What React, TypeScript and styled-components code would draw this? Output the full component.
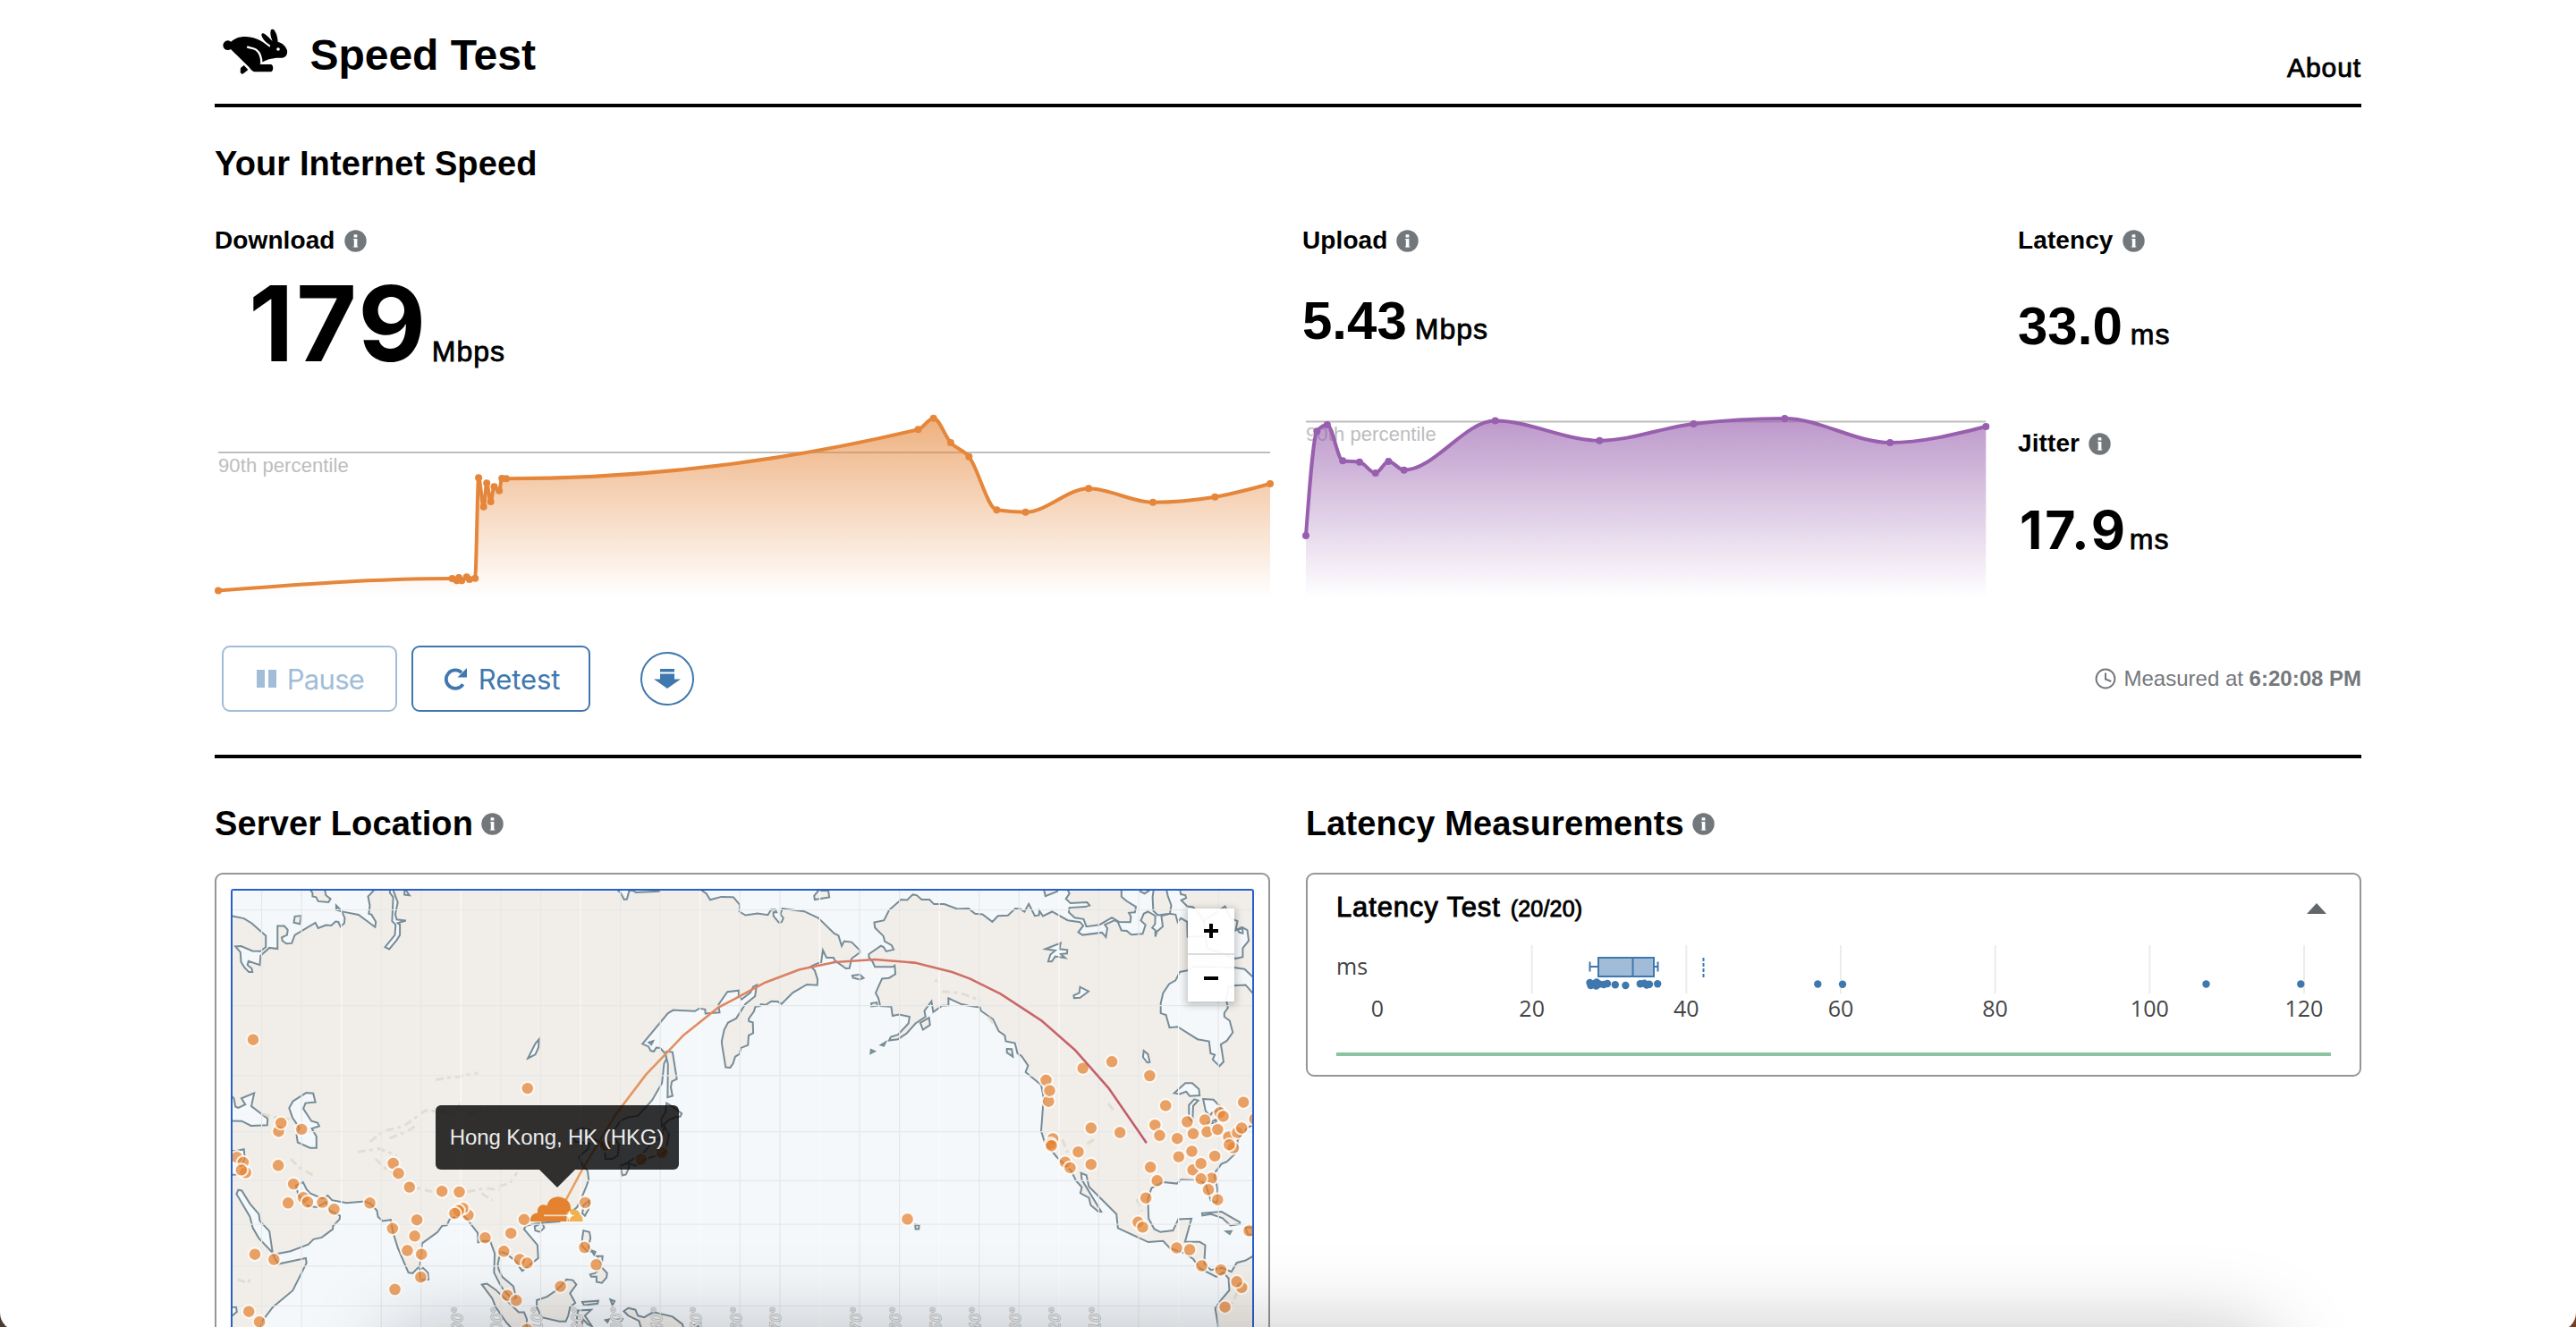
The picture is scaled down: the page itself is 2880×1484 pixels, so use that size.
import React from "react";
import styled, { createGlobalStyle } from "styled-components";

const SANS = '"Liberation Sans", Arial, sans-serif';
const INTER = 'Inter, "Liberation Sans", sans-serif';
const AXIS = '"Open Sans", Verdana, sans-serif';
const BLUE = "#3f78ae";

const GlobalStyle = createGlobalStyle`
  * { box-sizing: border-box; }
  html, body { margin: 0; padding: 0; }
  body { font-family: ${SANS}; color: #000; overflow: hidden; }
  h1, h2, h3 { margin: 0; }
`;

/* ---------- layout ---------- */

const Desktop = styled.div`
  height: 1484px;
  overflow: hidden;
  position: relative;
  background: linear-gradient(90deg, #4b3b30 50%, #7a3b1f 50%);
`;
const Page = styled.div`
  height: 1488px;
  padding: 0 240px;
  overflow: hidden;
  background: #fff;
  border-radius: 0 0 20px 20px;
`;
const DockShadow = styled.div`
  position: absolute;
  left: 430px;
  top: 1492px;
  width: 2110px;
  height: 200px;
  border-radius: 40px;
  box-shadow: 0 0 96px rgba(10, 12, 20, 0.27);
  pointer-events: none;
`;
const Header = styled.header`
  height: 120px;
  display: flex;
  justify-content: space-between;
  align-items: flex-start;
  border-bottom: 4px solid #000;
`;
const Brand = styled.div`
  display: flex;
  align-items: flex-start;
`;
const BrandMark = styled.svg`
  width: 76.7px;
  height: 53.3px;
  margin: 31px 23px 0 6.7px;
`;
const BrandName = styled.h1`
  margin-top: 32px;
  font-size: 48px;
  line-height: 60px;
  font-weight: 700;
`;
const AboutLink = styled.a`
  margin-top: 58px;
  font-size: 30px;
  line-height: 36px;
  letter-spacing: 0.9px;
  -webkit-text-stroke: 0.9px #000;
`;
const Heading = styled.h2`
  display: flex;
  align-items: center;
  gap: 9px;
  font-size: 38px;
  line-height: 50px;
  letter-spacing: 0.12px;
  font-weight: 700;
`;
const Speed = styled.section`
  padding-top: 38px;
  border-bottom: 4px solid #000;
`;
const Metrics = styled.div`
  margin-top: 42px;
  height: 420px;
  display: grid;
  grid-template-columns: 1216px 800px 1fr;
`;
const Metric = styled.div`
  display: flex;
  flex-direction: column;
  align-items: flex-start;
`;
const Label = styled.div`
  display: flex;
  align-items: center;
  gap: 10px;
  font-size: 28px;
  line-height: 38px;
  letter-spacing: 0.1px;
  font-weight: 700;
`;
const Reading = styled.div<{ $top: number; $bottom: number; $left?: number; $gap?: number }>`
  height: 72px;
  margin-top: ${(p) => p.$top}px;
  margin-bottom: ${(p) => p.$bottom}px;
  padding-left: ${(p) => p.$left ?? 0}px;
  display: flex;
  align-items: baseline;
  gap: ${(p) => p.$gap ?? 9}px;
`;
const Figure = styled.span<{ $size: number; $track?: number; $inter?: boolean }>`
  font-family: ${(p) => (p.$inter ? INTER : SANS)};
  font-size: ${(p) => p.$size}px;
  line-height: 72px;
  font-weight: 700;
  letter-spacing: ${(p) => p.$track ?? 0}px;
`;
const Unit = styled.span`
  font-size: 32px;
  line-height: 40px;
  letter-spacing: 1px;
  -webkit-text-stroke: 0.8px #000;
`;
const Chart = styled.svg`
  display: block;
  overflow: visible;
`;
const ChartNote = styled.text`
  font: 22px ${SANS};
  letter-spacing: 0.1px;
  fill: #bdbdbd;
`;
const Controls = styled.div`
  margin: 52px 0 48px;
  padding-left: 8px;
  display: flex;
  align-items: center;
`;
const ActionButton = styled.button<{ $muted?: boolean; $width: number }>`
  width: ${(p) => p.$width}px;
  height: 74px;
  margin-right: 16px;
  padding: 0 0 0 2px;
  display: flex;
  align-items: center;
  justify-content: center;
  gap: 12px;
  color: ${(p) => (p.$muted ? "#a1bdd8" : BLUE)};
  background: #fff;
  border: 2px solid currentColor;
  border-radius: 9px;
  font: 31px ${INTER};
  letter-spacing: ${(p) => (p.$muted ? "-0.7px" : "-0.1px")};
`;
const RoundButton = styled.button`
  width: 60px;
  height: 60px;
  margin-left: 40px;
  padding: 0;
  display: grid;
  place-items: center;
  color: ${BLUE};
  background: #fff;
  border: 2px solid currentColor;
  border-radius: 50%;
`;
const Measured = styled.div`
  margin-left: auto;
  display: flex;
  align-items: center;
  gap: 9px;
  color: #74787c;
  font-size: 24px;
  line-height: 32px;
`;
const Details = styled.div`
  margin-top: 48px;
  display: grid;
  grid-template-columns: 1180px 1180px;
  gap: 40px;
`;
const Card = styled.div<{ $pad: string; $height: number }>`
  margin-top: 30px;
  height: ${(p) => p.$height}px;
  padding: ${(p) => p.$pad};
  border: 2px solid #92979b;
  border-radius: 9px;
`;

/* ---------- map ---------- */

const MapFrame = styled.div`
  position: relative;
  border: 2px solid #2a5fca;
  border-radius: 3px;
`;
const MapSvg = styled.svg`
  display: block;
  width: 1140px;
  height: 600px;
  background: #f4f8fb;
`;
const Meridian = styled.text`
  font: italic 16px "Liberation Sans", sans-serif;
  letter-spacing: 1px;
  fill: #f1f2f3;
  stroke: #b9bcbf;
  stroke-width: 1.6px;
  paint-order: stroke;
`;
const ZoomControl = styled.div`
  position: absolute;
  left: 1068px;
  top: 20px;
  width: 52px;
  background: rgba(255, 255, 255, 0.93);
  box-shadow: 0 2px 8px 2px rgba(0, 0, 0, 0.22);
`;
const ZoomButton = styled.button<{ $divided?: boolean }>`
  width: 100%;
  height: 52px;
  padding: 0;
  display: grid;
  place-items: center;
  background: none;
  border: 0;
  border-bottom: ${(p) => (p.$divided ? "2px solid #dcdcdc" : "0")};
`;
const Tooltip = styled.div`
  position: absolute;
  left: 226.5px;
  top: 240px;
  width: 272px;
  height: 72px;
  display: grid;
  place-items: center;
  color: #ececec;
  background: rgba(5, 5, 5, 0.82);
  border-radius: 6px;
  font-size: 24px;
  line-height: 72px;
  letter-spacing: -0.1px;
  &::after {
    content: "";
    position: absolute;
    top: 100%;
    left: 116px;
    border: 20px solid transparent;
    border-top-color: rgba(5, 5, 5, 0.82);
    border-bottom: 0;
  }
`;

/* ---------- latency card ---------- */

const TestHead = styled.div`
  margin-bottom: 7px;
  display: flex;
  align-items: baseline;
  font-size: 31px;
  line-height: 36px;
  letter-spacing: 0.85px;
  -webkit-text-stroke: 0.9px #000;
`;
const TestCount = styled.span`
  margin-left: 11px;
  font-size: 25px;
  letter-spacing: 0.2px;
`;
const Caret = styled.span`
  margin: 0 5px 0 auto;
  align-self: center;
  border: 11px solid transparent;
  border-bottom: 12px solid #62676a;
  border-top: 0;
`;
const AxisText = styled.text`
  font: 25px ${AXIS};
  fill: #444;
`;
const Progress = styled.div`
  margin-top: 26px;
  height: 4px;
  background: #8bc4a0;
`;

/* ---------- icons ---------- */

const InfoIcon = () => (
  <svg width="25" height="25" viewBox="0 0 25 25">
    <circle cx="12.5" cy="12.5" r="12.2" fill="#72777b" />
    <rect x="10.6" y="5.2" width="3.8" height="3.4" rx="0.6" fill="#fff" />
    <rect x="10.8" y="10" width="3.6" height="9.6" rx="0.4" fill="#fff" />
    <path d="M9.8 10h3v1.3h-3zM9.8 18.3h5.6v1.3H9.800z" fill="#fff" fillOpacity="0.6" />
  </svg>
);

const Rabbit = () => (
  <BrandMark viewBox="20 15 230 160">
    <circle cx="43" cy="74" r="16" />
    <path d="M52 64C66 50 84 44 104 45C140 46 164 64 183 80L186 74C172 66 158 52 156 39C156 33 162 32 167 36C177 43 186 54 193 60C188 48 184 36 187 25C189 19 196 19 200 25C208 37 210 50 211 62C227 67 238 77 242 91C244 105 238 114 226 116L206 116C188 118 172 122 160 130L150 138L188 138C197 140 197 161 188 163L132 163C124 160 120 154 114 147L72 106C64 98 58 92 52 86Z" />
    <path d="M110 80C118 84 128 82 138 89C150 98 156 110 156 134" fill="none" stroke="#fff" strokeWidth="7" strokeLinecap="round" />
    <circle cx="212" cy="87" r="5.5" fill="#fff" />
    <path d="M97 141L111 156L104 162L92 171L85 166L86 150Z" />
  </BrandMark>
);

const PauseIcon = () => (
  <svg width="22" height="20" viewBox="0 0 22 20" fill="currentColor">
    <rect width="9" height="20" />
    <rect x="13" width="9" height="20" />
  </svg>
);

const RetestIcon = () => (
  <svg width="27" height="27" viewBox="0 0 27 27" fill="none">
    <path d="M21.6 19.2A10.2 10.2 0 1 1 20 6.2" stroke="currentColor" strokeWidth="3.8" />
    <path d="M26 1V11.5H15.5Z" fill="currentColor" />
  </svg>
);

const SaveIcon = () => (
  <svg width="30" height="22" viewBox="0 0 30 22" fill="currentColor">
    <path d="M7 0h16v3.6H7zM7 5.6h16v5.8h7L15 22 0 11.4h7z" />
  </svg>
);

const ClockIcon = () => (
  <svg width="24" height="24" viewBox="0 0 24 24" fill="none" stroke="currentColor" strokeWidth="2">
    <circle cx="12" cy="12" r="10.4" />
    <path d="M12 5.5V12.5L18.3 15" />
  </svg>
);

/* ---------- speed charts ---------- */

type Pt = [number, number];

/* Monotone cubic interpolation, so the line never overshoots a sample. */
function monotone(p: Pt[]): string {
  const n = p.length;
  const slope = (i: number) => (p[i + 1][1] - p[i][1]) / (p[i + 1][0] - p[i][0]);
  const t: number[] = [];
  for (let i = 1; i < n - 1; i++) {
    const h0 = p[i][0] - p[i - 1][0];
    const h1 = p[i + 1][0] - p[i][0];
    const s0 = slope(i - 1);
    const s1 = slope(i);
    const w = (s0 * h1 + s1 * h0) / (h0 + h1);
    t[i] = (Math.sign(s0) + Math.sign(s1)) * Math.min(Math.abs(s0), Math.abs(s1), 0.5 * Math.abs(w)) || 0;
  }
  t[0] = (3 * slope(0) - t[1]) / 2;
  t[n - 1] = (3 * slope(n - 2) - t[n - 2]) / 2;
  let d = `M${p[0][0]},${p[0][1]}`;
  for (let i = 0; i < n - 1; i++) {
    const dx = (p[i + 1][0] - p[i][0]) / 3;
    d += `C${p[i][0] + dx},${p[i][1] + dx * t[i]} ${p[i + 1][0] - dx},${p[i + 1][1] - dx * t[i + 1]} ${p[i + 1][0]},${p[i + 1][1]}`;
  }
  return d;
}

const DOWNLOAD: Pt[] = [
  [244, 660.5], [505.5, 647], [510.6, 649.3], [513, 646], [516.2, 649.3], [521.7, 645.3], [524.9, 648],
  [531.2, 646.7], [535.1, 534.3], [540.7, 566.7], [544.2, 540.3], [548.6, 561], [552.5, 544.3],
  [558.1, 548.7], [561.2, 535], [566, 535.3], [1026.5, 480.3], [1043.7, 467.7], [1062.9, 495],
  [1083.3, 510.7], [1114.3, 570.3], [1146.5, 572.7], [1217.1, 546.3], [1289, 561.7], [1358.4, 555.7],
  [1420, 541],
];
const UPLOAD: Pt[] = [
  [1460, 599], [1472.4, 482.3], [1483.9, 475], [1501.2, 515.3], [1520, 516.7], [1537.8, 529],
  [1552.4, 516], [1569.7, 525.7], [1671.7, 470.5], [1788.3, 492.7], [1893.5, 474], [1995.4, 468],
  [2113.1, 495], [2220.3, 477],
];

interface SpeedChartProps {
  id: string;
  points: Pt[];
  color: string;
  x: number;
  width: number;
  mark: number;
}
const SpeedChart = ({ id, points, color, x, width, mark }: SpeedChartProps) => {
  const line = monotone(points);
  const first = points[0][0];
  const last = points[points.length - 1][0];
  return (
    <Chart width={width} height={230} viewBox={`${x} 440 ${width} 230`}>
      <defs>
        <linearGradient id={id} gradientUnits="userSpaceOnUse" x1="0" x2="0" y1="467" y2="668">
          <stop offset="0" stopColor={color} stopOpacity="0.65" />
          <stop offset="1" stopColor={color} stopOpacity="0" />
        </linearGradient>
      </defs>
      <path d={`M${first},${mark}H${last}`} stroke="#bdbfbc" strokeWidth="2" />
      <ChartNote x={first} y={mark + 21.5}>90th percentile</ChartNote>
      <path d={`${line}V668H${first}Z`} fill={`url(#${id})`} />
      <path d={line} fill="none" stroke={color} strokeWidth="4" strokeLinejoin="round" />
      {points.map(([cx, cy], i) => (
        <circle key={i} cx={cx} cy={cy} r="4" fill={color} />
      ))}
    </Chart>
  );
};

/* ---------- world map ---------- */

/* Outlines are digitised on two sheets, each with its own origin and scale. */
const sheet = (ox: number, oy: number, sx: number, sy: number) => (s: string): Pt[] =>
  s.trim().split(/\s+/).map((q) => {
    const [a, b] = q.split(",").map(Number);
    return [+(ox + a / sx).toFixed(1), +(oy + b / sy).toFixed(1)];
  });
const west = sheet(230, 880, 2.529, 2.596);
const east = sheet(820, 960, 2.529, 2.992);
const ring = (p: Pt[]) => "M" + p.map((q) => q.join(",")).join("L") + "Z";

const EURASIA = ring([
  ...west(`40,372 76,375 108,382 130,396 170,432 170,465 155,477 132,476 100,462 84,463 98,480 100,508 110,525 122,537
    132,537 130,527 118,517 121,506 153,517 155,490 180,467 203,470 203,404 222,404 232,415 230,430 215,437
    217,447 228,455 243,454 252,430 310,394 318,410 340,401 355,402 367,391 375,392 381,406 392,395 393,380
    384,360 369,344 369,357 385,362 432,371 479,407 481,392 469,371 461,368 464,345 459,318 475,301 475,280
    520,280 521,308 530,320 527,390 537,400 535,430 507,465 519,471 540,445 549,430 549,400 543,395 566,388
    540,385 536,370 543,335 531,303 531,280 1160,280 1165,300 1173,307 1183,327 1191,326 1197,303 1205,300
    1217,306 1283,303 1283,280 1395,280 1402,300 1416,310 1426,328 1458,319 1488,320`),
  ...east(`0,130 18,155 17,178 34,190 68,184 97,189 107,171 118,171 122,180 113,180 113,193 129,215 136,213 141,200
    133,186 138,168 200,177 240,199 285,251 297,258 306,293 313,277 334,280 357,307 357,315 334,335 328,367
    318,368 287,342 283,332 263,332 253,307 248,347 230,355 219,361 230,375 238,405 237,424 208,422 168,449
    136,487 125,479 107,478 91,490 78,488 75,494 62,496 58,512 43,537 44,545 55,548 56,585 43,592 41,625
    21,634 17,655 4,664`),
  ...west(`1497,783 1491,803 1483,815 1470,814 1460,750 1459,738 1466,705 1477,684 1500,672 1526,630 1553,608
    1558,575 1548,580 1540,597 1515,617 1507,607 1507,591 1475,595 1450,632 1453,655 1413,658 1412,646
    1396,643 1383,651 1322,648 1307,657 1235,746 1252,754 1258,766 1267,768 1274,757 1285,758 1300,775
    1303,789 1296,803 1290,860 1262,910 1222,955 1192,960 1172,970 1150,1005 1168,1040 1165,1070 1150,1080
    1130,1080 1128,1050 1115,1030 1090,1020 1085,995 1060,990 1035,1005 1045,1030 1085,1035 1082,1050
    1055,1075 1067,1100 1080,1115 1083,1140 1076,1160 1062,1195 1050,1220 1000,1262 960,1265 930,1268
    905,1275 900,1284 938,1330 940,1368 895,1405 888,1395 880,1380 850,1355 833,1350 826,1385 828,1400
    838,1422 870,1450 877,1483 868,1488 842,1460 830,1440 815,1410 817,1355 805,1320 790,1318 770,1322
    769,1295 735,1250 722,1240 690,1255 682,1272 668,1275 655,1293 612,1325 606,1390 585,1412 573,1410
    543,1338 530,1295 523,1257 500,1260 487,1248 484,1230 465,1210 450,1203 398,1208 357,1200 345,1186
    330,1195 295,1180 285,1168 275,1147 255,1157 262,1185 290,1217 315,1220 340,1205 350,1230 380,1245
    378,1256 360,1275 359,1284 328,1308 305,1313 290,1328 240,1348 190,1358 180,1290 153,1260 150,1240
    125,1210 102,1172 92,1170 87,1182 125,1248 133,1280 150,1310 185,1348 205,1385 283,1368 285,1382
    246,1462 190,1510 160,1550 140,1640 20,1640`),
]);

const AMERICA = ring(east(`383,320 417,292 425,297 432,311 453,305 447,290 428,278 424,260 400,232 398,214 426,207
    440,173 474,138 491,139 507,121 518,123 532,138 554,138 567,153 596,153 633,169 665,168 683,185 704,187
    732,212 748,192 776,191 797,168 810,169 823,178 835,152 852,192 864,190 865,175 875,193 901,178 945,207
    980,213 989,225 975,247 987,256 1042,248 1053,263 1057,233 1050,222 1078,207 1087,213 1097,241 1112,242
    1125,255 1157,252 1165,222 1152,208 1160,185 1172,178 1193,192 1192,220 1184,232 1193,240 1193,262
    1197,245 1214,228 1210,192 1234,185 1250,188 1256,213 1265,200 1283,212 1284,262 1350,260 1320,190
    1300,163 1283,160 1266,140 1280,132 1278,123 1265,120 1258,80 1520,80 1520,880 1480,885 1455,900
    1435,925 1425,945 1428,975 1415,992 1395,1015 1380,1022 1362,1050 1360,1065 1368,1100 1370,1140
    1365,1152 1350,1145 1343,1120 1335,1090 1320,1078 1265,1075 1254,1088 1215,1083 1182,1103 1172,1140
    1174,1205 1190,1240 1207,1250 1243,1245 1258,1207 1295,1205 1277,1282 1318,1283 1334,1294 1331,1355
    1350,1377 1380,1370 1408,1383 1423,1353 1448,1345 1470,1330 1520,1310 1520,1700 1380,1700 1370,1560
    1362,1505 1380,1475 1402,1445 1400,1405 1385,1385 1365,1400 1320,1372 1300,1340 1275,1320 1235,1305
    1215,1280 1173,1284 1087,1237 1083,1190 1005,1098 998,1060 983,1053 985,1075 1040,1182 1032,1182
    1010,1160 1005,1135 981,1120 985,1100 968,1078 955,1045 915,1000 880,950 870,912 877,800 870,758
    826,715 833,693 815,662 803,652 796,618 770,612 767,592 750,578 734,538 700,510 697,498 665,493
    645,488 608,468 608,492 590,493 565,514 560,478 540,510 543,530 515,552 490,585 465,605 440,609
    445,597 465,590 495,552 498,530 468,522 450,527 446,496 415,494 410,468 402,450 420,402 440,400
    458,387 456,358 450,363 400,363 393,345 383,330`));

const WEST_ISLANDS = [
  "290,290 302,308 302,318 312,320 318,332 347,335 353,325 340,315 335,290",
  "249,394 252,376 270,374 266,398",
  "1300,775 1303,768 1320,770 1332,848 1318,855 1315,872 1320,897 1306,901 1307,805",
  "1303,918 1322,930 1346,948 1342,957 1325,960 1308,968 1290,985 1287,965 1300,945",
  "1297,985 1310,1010 1300,1060 1270,1072 1245,1080 1215,1100 1190,1092 1240,1060 1260,1035 1290,1015",
  "1172,1100 1195,1092 1197,1105 1188,1125 1178,1128",
  "1068,1215 1085,1200 1083,1225 1072,1245 1065,1238",
  "930,1276 952,1265 957,1280 945,1292 932,1288",
  "1068,1288 1085,1292 1088,1310 1082,1335 1092,1348 1080,1350 1062,1330",
  "1087,1415 1100,1412 1120,1395 1135,1412 1133,1425 1120,1440 1105,1437 1105,1422 1090,1422",
  "1090,1345 1102,1350 1098,1358",
  "1106,1362 1122,1362 1120,1385 1112,1372",
  "605,1400 615,1397 628,1410 630,1430 608,1432",
  "781,1445 795,1442 820,1460 860,1500 885,1525 900,1525 908,1545 905,1640 890,1600 850,1555 820,1510 810,1485",
  "936,1490 965,1480 990,1462 1003,1450 1020,1430 1038,1432 1048,1445 1030,1470 1045,1498 1030,1510 1025,1535 1018,1552 1000,1552 950,1540 936,1510",
  "1064,1495 1110,1492 1108,1500 1070,1505",
  "1052,1520 1090,1518 1072,1535 1092,1566 1080,1560 1066,1545 1062,1590 1048,1560",
  "1144,1488 1156,1493 1150,1505",
  "1130,1548 1140,1546 1136,1554",
  "1150,1547 1178,1545 1175,1551",
  "1182,1522 1195,1513 1215,1518 1222,1535 1240,1540 1265,1525 1320,1538 1348,1560 1370,1640 1250,1640 1230,1568 1225,1550 1195,1535",
  "1384,1562 1398,1558 1393,1566",
];
const WEST_WATERS = [
  "50,870 80,905 84,928 92,932 112,922 101,904 137,889 129,927 175,963 174,982 128,984 102,970 50,969",
  "247,912 284,888 304,890 310,915 282,918 276,934 299,970 316,975 321,985 300,992 313,1015 313,1048 295,1048 260,1032 257,1010 265,990 245,960 236,932",
  "911,788 932,777 941,756 942,733 932,745",
  "50,1058 90,1056 108,1052 110,1075 95,1125 50,1128",
  "562,285 562,313 576,315 566,300",
  "1253,742 1265,738 1260,748",
  "50,1510 86,1510 88,1524 76,1534 50,1534",
];
const EAST_ISLANDS = [
  "940,90 950,118 940,135 953,150 1000,147 1007,157 995,162 950,165 948,180 965,198 990,203 998,228 1035,222 1070,198 1090,212 1122,213 1124,195 1118,182 1135,180 1138,162 1112,143 1097,128 1097,90",
  "875,90 882,126 916,110 916,90",
  "1190,90 1185,130 1187,175 1200,190 1234,185 1238,157 1228,125 1222,90",
  "1148,90 1150,110 1162,118 1175,108 1175,90",
  "528,550 553,533 556,557 536,573",
  "773,637 787,638 790,663 773,650",
  "336,392 357,388 368,400 357,405 338,399",
  "228,125 240,108 268,108 271,130 230,138",
  "514,1225 525,1228 524,1240 515,1240",
  "1325,1187 1380,1182 1432,1217 1432,1223 1405,1228 1382,1203 1350,1190 1326,1195",
  "1393,1248 1408,1247 1403,1257",
  "1447,1235 1490,1235 1490,1262 1455,1258",
  "417,624 430,615 425,627",
  "388,652 389,640 399,645",
  "390,485 405,482 407,493 390,495",
];
const EAST_WATERS = [
  "1300,362 1284,375 1262,380 1250,408 1232,420 1215,450 1208,485 1208,518 1223,524 1233,566 1256,563 1312,605 1345,612 1349,652 1361,657 1355,673 1374,695 1386,680 1378,622 1395,610 1412,582 1403,543 1388,530 1388,517 1398,500 1393,470 1400,430 1420,425 1448,423 1475,460 1520,460 1520,400 1472,400 1445,370 1415,365",
  "1330,210 1390,160 1405,200 1425,210 1420,240 1438,230 1453,240 1457,275 1440,300 1440,330 1420,335 1340,300",
  "1425,238 1440,234 1440,250 1430,247",
  "1246,785 1278,752 1297,752 1316,772 1318,793 1290,795 1280,780 1262,788",
  "1288,825 1303,806 1314,810 1300,828 1298,880 1288,870",
  "1328,805 1357,807 1380,835 1352,852 1348,862 1335,845",
  "1340,887 1368,872 1362,885",
  "1160,643 1172,655 1177,682 1170,683 1158,665",
  "882,303 925,283 922,303 944,306 943,318 925,320 938,333 910,328 900,345 890,345 896,322 910,308",
  "962,458 978,450 980,430 1004,445 980,466 963,467",
];

/* Faint mountain relief. */
const RELIEF = [
  ...["465,1030 500,1000 560,985 620,940 700,945 720,920", "480,1080 510,1110 560,1140 600,1165 640,1175",
    "520,1020 570,1000 600,980", "740,1175 790,1165 830,1170", "830,1160 860,1150 880,1120",
    "160,950 200,960 240,965", "240,1080 270,1110 310,1130", "430,1060 490,1050 540,1070",
    "650,850 720,840 770,830", "740,950 800,940", "90,1430 120,1440 130,1420", "780,1180 810,1200"].map(west),
  ...["570,405 575,412", "590,445 640,450 700,475", "720,530 740,560", "930,940 945,985", "1000,955 1020,940",
    "1060,820 1080,850", "1140,1140 1155,1180", "1425,1450 1410,1490"].map(east),
];

const ROUTE = [
  ...west("1010,1215 1065,1110 1160,950 1245,835 1350,722 1450,640"),
  ...east("0,472 90,415 187,372 287,347 400,338 512,349 618,380 668,402 755,453 870,542 965,640 1062,770 1168,952"),
];

const SITES = [
  ...west(`134,734 910,875 206,1000 213,976 271,994 88,1075 106,1090 113,1120 101,1112 205,1099 248,1153 233,1208
    276,1192 288,1205 330,1206 363,1226 464,1208 530,1093 545,1122 576,1162 668,1174 717,1176 597,1257
    591,1304 570,1346 610,1357 528,1282 608,1423 535,1459 742,1243 727,1223 715,1230 704,1238 790,1309
    863,1296 900,1256 843,1348 888,1372 909,1382 853,1476 878,1491 1003,1450 1071,1337 1104,1387 1073,1207
    139,1357 193,1372 122,1523 152,1553 908,1575 1130,1040 1231,1082 1290,1062`),
  ...east(`492,1207 884,742 891,813 894,777 988,702 1070,680 1177,727 1222,827 1442,816 1375,850 1385,863 1283,881
    1333,875 1192,892 1205,927 1255,937 1300,921 1339,915 1369,907 1400,932 1425,917 1437,902 1474,872
    1413,968 1402,958 1011,902 1093,917 903,938 897,955 899,961 975,982 1011,1024 938,1016 952,1035
    1259,998 1296,980 1361,996 1299,1042 1322,1021 1179,1033 1198,1078 1352,1070 1322,1072 1343,1108
    1369,1142 1166,1136 1144,1217 1157,1234 1253,1303 1290,1309 1324,1363 1378,1377 1437,1436 1423,1416
    1390,1501 1458,1246`),
];

const MERIDIANS = Array.from({ length: 25 }, (_, i) => 292.5 + 44.57 * i);
const PARALLELS = [1017.5, 1124.6, 1202.8, 1265.6, 1320.3, 1369.2, 1415.8, 1460.5];
const LAND = "#f1eee9";
const WATER = "#f4f8fb";
const COAST = "#778c97";

const WorldMap = () => (
  <MapSvg viewBox="260 996 1140 600">
    <defs>
      <linearGradient id="route" x1="0" x2="1" y1="0" y2="0">
        <stop offset="0" stopColor="#e9a15f" />
        <stop offset="0.35" stopColor="#dc8262" />
        <stop offset="1" stopColor="#c25a6c" />
      </linearGradient>
    </defs>
    <g fill={LAND} stroke={COAST} strokeWidth="2">
      <path d={EURASIA} />
      <path d={AMERICA} />
      {WEST_ISLANDS.map((s) => <path key={s} d={ring(west(s))} />)}
      {EAST_ISLANDS.map((s) => <path key={s} d={ring(east(s))} />)}
    </g>
    <g fill={WATER} stroke={COAST} strokeWidth="2">
      {WEST_WATERS.map((s) => <path key={s} d={ring(west(s))} />)}
      {EAST_WATERS.map((s) => <path key={s} d={ring(east(s))} />)}
    </g>
    <g fill="none" stroke="#dcdacb" strokeOpacity="0.8" strokeWidth="3" strokeDasharray="9 4 4 5">
      {RELIEF.map((p, i) => <path key={i} d={"M" + p.join("L")} />)}
    </g>
    {MERIDIANS.map((x, i) => (
      <path key={x} d={`M${x},996V1596`} stroke={i % 3 === 2 ? "#fafafa" : "#e6e7e7"} strokeWidth="1.2" />
    ))}
    {PARALLELS.map((y) => (
      <path key={y} d={`M260,${y}H1400`} stroke="#e6e7e7" strokeWidth="1.2" />
    ))}
    {MERIDIANS.map((x, i) => {
      const degrees = 40 + 10 * i;
      if (i < 5 || degrees === 180 || i > 21) return null;
      const label = degrees > 180 ? 360 - degrees : degrees;
      return (
        <Meridian key={x} textAnchor="end" transform={`translate(${x + 1.5} 1461) rotate(-90)`}>
          {label}°
        </Meridian>
      );
    })}
    <g fill="#e58230" fillOpacity="0.72" stroke="#fff" strokeOpacity="0.85" strokeWidth="2">
      {SITES.map(([cx, cy], i) => <circle key={i} cx={cx} cy={cy} r="7.2" />)}
    </g>
    <path d={"M" + ROUTE.join("L")} fill="none" stroke="url(#route)" strokeWidth="2.6" strokeLinejoin="round" />
    <g>
      <path d="M634.500 1366V1354C638 1351.500 643 1351.500 646 1354C648 1355.500 648.500 1357 648.700 1358.500C650.700 1360 651.500 1362 651.500 1366Z" fill="#f2b04f" />
      <path d="M593 1366C592.500 1360 596 1356.500 601 1356.500C600 1349 606 1345 611.500 1348.500C613 1341.500 619 1338 625 1338.400C633 1339 639 1345 638 1353L633.500 1357V1366Z" fill="#e5822f" />
      <path d="M608 1359.300H632" stroke="#fff" strokeOpacity="0.7" strokeWidth="1.8" />
      <path d="M636.500 1353.500L638 1358L642 1359.300L638 1361L636.500 1365.500L635 1361L631 1359.300L635 1358Z" fill="#fff" />
    </g>
  </MapSvg>
);

/* ---------- latency box plot ---------- */

const TICKS = [0, 20, 40, 60, 80, 100, 120];
const tickX = (ms: number) => 1540 + 8.633 * ms;
const SAMPLES: Pt[] = [
  [1777.5, 1098], [1778.5, 1101], [1781.5, 1099.5], [1784.5, 1101.5], [1785, 1097.5], [1788, 1099.5], [1793, 1100],
  [1797, 1099], [1805.8, 1100.2], [1817.4, 1101], [1833.8, 1099.2], [1838.4, 1098.8], [1841, 1100.5],
  [1844, 1099.7], [1853.2, 1099.2], [2032.3, 1099.5], [2060, 1099.8], [2466.5, 1099.5], [2572.3, 1099.5],
];

const BoxPlot = () => (
  <Chart width={1112} height={110} viewBox="1494 1040 1112 110">
    {TICKS.map((ms) => (
      <g key={ms}>
        {ms > 0 && <path d={`M${tickX(ms)},1056V1110`} stroke="#ececec" strokeWidth="2" />}
        <AxisText x={tickX(ms)} y={1135.5} textAnchor="middle">{ms}</AxisText>
      </g>
    ))}
    <AxisText x={1494} y={1088.5}>ms</AxisText>
    <g stroke={BLUE} strokeWidth="2" fill="none">
      <path d="M1777.500 1074.500V1085.500M1777.500 1080H1787M1849 1080H1853.500M1853.500 1074.500V1085.500" />
      <rect x="1787" y="1070" width="62" height="21" fill="#a1bcd8" />
      <path d="M1825.500 1070V1091" />
      <path d="M1904.500 1070V1092" strokeDasharray="4 2" />
    </g>
    {SAMPLES.map(([x, y], i) => <circle key={i} cx={x} cy={y} r="4.2" fill={BLUE} />)}
  </Chart>
);

/* ---------- page ---------- */

export default function App() {
  return (
    <Desktop>
      <GlobalStyle />
      <Page>
        <Header>
          <Brand>
            <Rabbit />
            <BrandName>Speed Test</BrandName>
          </Brand>
          <AboutLink>About</AboutLink>
        </Header>

        <Speed>
          <Heading>Your Internet Speed</Heading>
          <Metrics>
            <Metric>
              <Label>Download <InfoIcon /></Label>
              <Reading $top={38} $bottom={42} $left={38} $gap={4}>
                <Figure $size={117} $track={2.5} $inter>179</Figure>
                <Unit>Mbps</Unit>
              </Reading>
              <SpeedChart id="down" points={DOWNLOAD} color="#e5863a" x={240} width={1190} mark={506} />
            </Metric>
            <Metric>
              <Label>Upload <InfoIcon /></Label>
              <Reading $top={35} $bottom={45}>
                <Figure $size={60}>5.43</Figure>
                <Unit>Mbps</Unit>
              </Reading>
              <SpeedChart id="up" points={UPLOAD} color="#985fae" x={1456} width={780} mark={471.5} />
            </Metric>
            <Metric>
              <Label>Latency <InfoIcon /></Label>
              <Reading $top={41} $bottom={76}>
                <Figure $size={60}>33.0</Figure>
                <Unit>ms</Unit>
              </Reading>
              <Label>Jitter <InfoIcon /></Label>
              <Reading $top={42} $bottom={0} $left={2} $gap={2}>
                <Figure $size={59} $track={2.8} $inter>17.9</Figure>
                <Unit>ms</Unit>
              </Reading>
            </Metric>
          </Metrics>
          <Controls>
            <ActionButton $width={196} $muted><PauseIcon /> Pause</ActionButton>
            <ActionButton $width={200}><RetestIcon /> Retest</ActionButton>
            <RoundButton><SaveIcon /></RoundButton>
            <Measured>
              <ClockIcon />
              <span>Measured at <b>6:20:08 PM</b></span>
            </Measured>
          </Controls>
        </Speed>

        <Details>
          <div>
            <Heading>Server Location <InfoIcon /></Heading>
            <Card $pad="16px" $height={640}>
              <MapFrame>
                <WorldMap />
                <ZoomControl>
                  <ZoomButton $divided>
                    <svg width="16" height="16" viewBox="0 0 16 16"><path d="M8 0V16M0 8H16" stroke="#000" strokeWidth="4" /></svg>
                  </ZoomButton>
                  <ZoomButton>
                    <svg width="16" height="16" viewBox="0 0 16 16"><path d="M0 8H16" stroke="#000" strokeWidth="4" /></svg>
                  </ZoomButton>
                </ZoomControl>
                <Tooltip>Hong Kong, HK (HKG)</Tooltip>
              </MapFrame>
            </Card>
          </div>
          <div>
            <Heading>Latency Measurements <InfoIcon /></Heading>
            <Card $pad="19px 32px 0" $height={228}>
              <TestHead>
                Latency Test <TestCount>(20/20)</TestCount>
                <Caret />
              </TestHead>
              <BoxPlot />
              <Progress />
            </Card>
          </div>
        </Details>
      </Page>
      <DockShadow />
    </Desktop>
  );
}
